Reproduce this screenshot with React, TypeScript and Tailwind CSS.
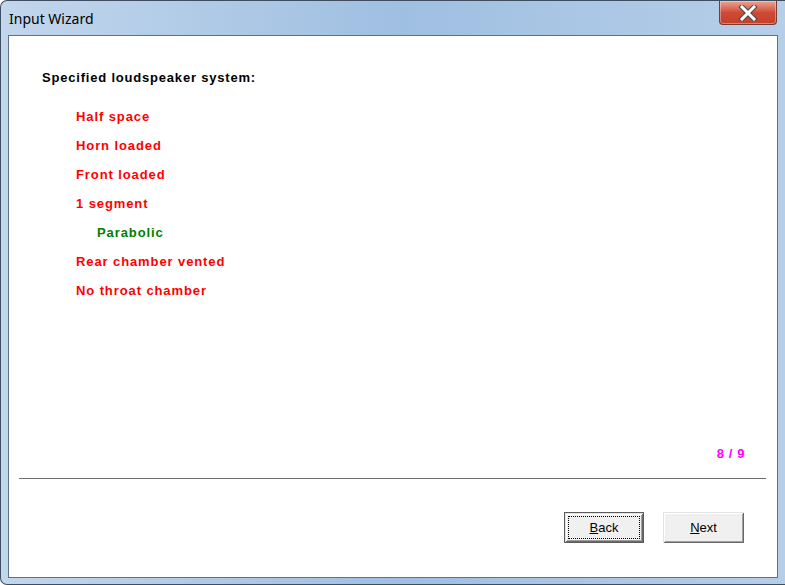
import React from "react";

type Item = { label: string; color: string; indent: boolean };

const items: Item[] = [
  { label: "Half space", color: "text-[#ff0000]", indent: false },
  { label: "Horn loaded", color: "text-[#ff0000]", indent: false },
  { label: "Front loaded", color: "text-[#ff0000]", indent: false },
  { label: "1 segment", color: "text-[#ff0000]", indent: false },
  { label: "Parabolic", color: "text-[#008000]", indent: true },
  { label: "Rear chamber vented", color: "text-[#ff0000]", indent: false },
  { label: "No throat chamber", color: "text-[#ff0000]", indent: false },
];

function CloseButton() {
  return (
    <div className="absolute left-[718px] top-0 w-[58px] h-[24px] rounded-b-[4px] border border-t-0 border-[#7a3a30] bg-gradient-to-b from-[#e8a493] via-[#cf4a35] to-[#c4402c] flex items-center justify-center shadow-[inset_0_0_0_1px_rgba(255,255,255,0.35)]">
      <svg width="20" height="16" viewBox="0 0 20 16">
        <path
          d="M4 2 L16 14 M16 2 L4 14"
          stroke="#4a4a4a"
          strokeWidth="5"
          strokeLinecap="square"
        />
        <path
          d="M4 2 L16 14 M16 2 L4 14"
          stroke="#ffffff"
          strokeWidth="3"
          strokeLinecap="square"
        />
      </svg>
    </div>
  );
}

export default function App() {
  return (
    <div className="w-[785px] h-[585px] overflow-hidden bg-white">
      <div
        className="relative w-[800px] h-[585px] rounded-tl-[7px] rounded-bl-[7px] border-l border-t border-b border-[#3e4d5f] bg-gradient-to-r from-[#c2d6ec] via-[#9fbfe1] to-[#b7cfe9] flex flex-col"
        style={{ fontFamily: '"Liberation Sans", Arial, sans-serif' }}
      >
        <div className="h-[34px] flex items-start shrink-0">
          <span
            className="pl-[8px] pt-[8px] text-[14px] leading-[20px] text-black"
            style={{ fontFamily: '"Noto Sans", "Open Sans", sans-serif' }}
          >
            Input Wizard
          </span>
        </div>
        <CloseButton />
        <div className="flex flex-1 pl-[7px]">
          <div className="w-[770px] h-[543px] border border-[#5f7088] bg-white flex flex-col">
            <div className="pl-[33px] pt-[34px] text-[13px] leading-[16px] font-bold tracking-[0.8px] text-black">
              Specified loudspeaker system:
            </div>
            <div className="flex flex-col pt-[23px] gap-[13px]">
              {items.map((it) => (
                <div
                  key={it.label}
                  className={`text-[13px] leading-[16px] font-bold tracking-[0.9px] ${it.color} ${it.indent ? "pl-[88px]" : "pl-[67px]"}`}
                >
                  {it.label}
                </div>
              ))}
            </div>
            <div className="flex justify-end pr-[32px] pt-[147px] text-[13px] leading-[16px] font-bold tracking-[0.6px] text-[#ff00ff]">
              8 / 9
            </div>
            <div className="ml-[10px] mr-[11px] mt-[16px] h-0 border-t border-[#6d6d6d]" />
            <div className="flex justify-end gap-[19px] pr-[33px] pt-[33px]">
              <button className="w-[80px] h-[31px] bg-[#f0f0f0] border border-[#5c5c5c] shadow-[inset_1px_1px_0_#e3e3e3,inset_-1px_-1px_0_#696969,inset_2px_2px_0_#ffffff,inset_-2px_-2px_0_#a0a0a0] flex items-center justify-center p-[3px]">
                <span className="w-full h-full border border-dotted border-black flex items-center justify-center text-[13px] text-black">
                  <span>
                    <u>B</u>ack
                  </span>
                </span>
              </button>
              <button className="w-[81px] h-[31px] bg-[#f0f0f0] shadow-[inset_1px_1px_0_#e3e3e3,inset_-1px_-1px_0_#696969,inset_2px_2px_0_#ffffff,inset_-2px_-2px_0_#a0a0a0] flex items-center justify-center text-[13px] text-black">
                <span>
                  <u>N</u>ext
                </span>
              </button>
            </div>
          </div>
        </div>
      </div>
    </div>
  );
}
